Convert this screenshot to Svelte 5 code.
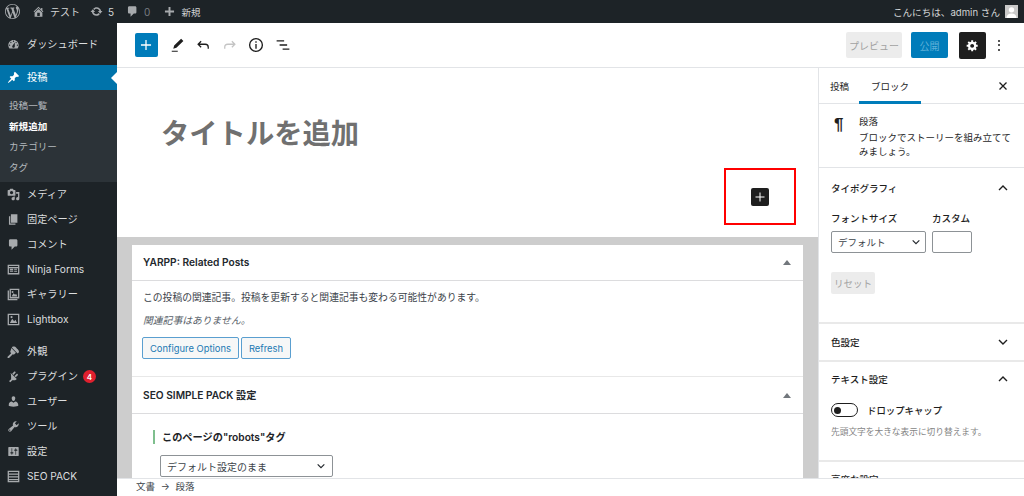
<script>
  const icons = {
    dash: "M3.76 16h12.48c1.1-1.37 1.76-3.11 1.76-5 0-4.42-3.58-8-8-8s-8 3.58-8 8c0 1.89.66 3.63 1.76 5zM10 4c.55 0 1 .45 1 1s-.45 1-1 1-1-.45-1-1 .45-1 1-1zM6 6c.55 0 1 .45 1 1s-.45 1-1 1-1-.45-1-1 .45-1 1-1zm8 0c.55 0 1 .45 1 1s-.45 1-1 1-1-.45-1-1 .45-1 1-1zm-5.370 5.550L12 7v6c0 1.100-.9 2-2 2s-2-.9-2-2c0-.57.24-1.080.63-1.450zM4 10c.55 0 1 .45 1 1s-.45 1-1 1-1-.45-1-1 .45-1 1-1zm12 0c.55 0 1 .45 1 1s-.45 1-1 1-1-.45-1-1 .45-1 1-1z",
    pin: "M10.440 3.020l1.820-1.820 6.360 6.350-1.830 1.820c-1.050-.68-2.480-.57-3.410.36l-.75.75c-.92.93-1.040 2.350-.35 3.410l-1.830 1.820-2.410-2.410-2.800 2.790c-.42.42-3.380 2.710-3.800 2.290s1.860-3.390 2.280-3.810l2.790-2.790L4.100 9.360l1.830-1.820c1.050.69 2.480.57 3.400-.36l.75-.75c.93-.92 1.050-2.350.36-3.410z",
    media: "M13 11V4c0-.55-.45-1-1-1h-1.670L9 1H5L3.670 3H2c-.55 0-1 .45-1 1v7c0 .55.45 1 1 1h10c.55 0 1-.45 1-1zM7 4.500c1.380 0 2.500 1.120 2.500 2.500S8.380 9.500 7 9.500 4.500 8.380 4.500 7 5.620 4.500 7 4.500zM14 6h5v10.500c0 1.380-1.120 2.500-2.500 2.500S14 17.880 14 16.500s1.120-2.500 2.500-2.500c.17 0 .34.020.5.050V9h-3V6zm-4 8.050V13h2v3.500c0 1.380-1.120 2.500-2.500 2.500S7 17.880 7 16.500 8.120 14 9.500 14c.17 0 .34.020.5.050z",
    page: "M6 15V2h10v13H6zm-1 1h8v2H3V5h2v11z",
    comment: "M5 2h9c1.100 0 2 .9 2 2v7c0 1.100-.9 2-2 2h-2l-5 5v-5H5c-1.100 0-2-.9-2-2V4c0-1.100.9-2 2-2z",
    forms: "M1 2.500h18v15H1v-15zm2 2V6h14V4.500H3zM3 8v7.500h14V8H3zm1.500 1h5v2.500h-5V9zm0 3.500h5V14h-5v-1.500zM11 9h4.500v1.500H11V9zm0 3h4.500v1.500H11V12z",
    gallery: "M1 4h2v13h13v2H1V4zm3-3h15v15H4V1zm2 2v11h11V3H6zm1 10l3-5 2.500 2.500L14 9l2 4H7zm1.500-8.500a1.500 1.500 0 1 1 0 3 1.500 1.500 0 0 1 0-3z",
    lightbox: "M1 1h18v18H1V1zm2 2v14h14V3H3zm1.500 12.500L8 9l3 3.500 2-2 2.500 5h-11zM7 4.500a1.700 1.700 0 1 1 0 3.400 1.700 1.700 0 0 1 0-3.400z",
    brush: "M14.480 11.060L7.410 3.990l1.500-1.500c.5-.56 2.300-.47 3.510.32 1.210.8 1.430 1.280 2.660 2.510 1.240 1.240 1.760 1.410 2.570 2.650.81 1.250.92 3.010.38 3.540l-1.500 1.500-2.050-1.950zM6.700 4.700l7.100 7.100-2.500 2.500c-.7.700-1.800.4-2.400-.2l-.8.800-5 5c-1 .4-2.500-.3-2.500-1.600l5.800-5.800-.8-.8c-.6-.6-.9-1.700-.2-2.400l1.300-4.600z",
    plug: "M13.110 4.360L9.870 7.600 8 5.730l3.240-3.240c.35-.34 1.050-.2 1.560.32.520.51.66 1.210.31 1.550zm3.530 3.530l-3.240 3.240-1.870-1.870 3.240-3.240c.35-.34 1.050-.2 1.560.31.520.52.66 1.220.31 1.560zM5.120 6.130l.91-1.120 9.010 9.010-1.190.84c-.71.71-2.110 1.060-3.250 1.060H8.170l-2.640 2.640c-.34.34-1.050.2-1.560-.31-.52-.52-.66-1.210-.31-1.560l2.640-2.640V9.380c0-1.140-.39-2.540-.32-3.250z",
    user: "M10 9.250c-2.270 0-2.730-3.440-2.730-3.440C7 4.020 7.820 2 9.970 2c2.160 0 2.980 2.020 2.710 3.810 0 0-.41 3.440-2.680 3.440zm0 2.570L12.720 10c2.390 0 4.520 2.330 4.520 4.530v2.490s-3.650 1.130-7.240 1.130c-3.650 0-7.240-1.130-7.240-1.130v-2.490c0-2.250 1.940-4.480 4.470-4.480z",
    tool: "M16.680 9.770c-1.340 1.340-3.300 1.670-4.950.99l-5.410 6.520c-.99.99-2.590.99-3.570 0-.99-.98-.99-2.580 0-3.570l6.520-5.420c-.68-1.650-.35-3.610.99-4.950 1.280-1.280 3.120-1.620 4.720-1.060l-2.890 2.890 2.820 2.820 2.860-2.870c.53 1.580.18 3.420-1.090 4.670zM4.930 16.430c.39-.39.39-1.020 0-1.410-.39-.39-1.030-.39-1.420 0-.39.39-.39 1.020 0 1.410.39.39 1.030.39 1.420 0z",
    settings: "M18 16V4c0-.55-.45-1-1-1H3c-.55 0-1 .45-1 1v12c0 .55.45 1 1 1h14c.55 0 1-.45 1-1zM8 11h1c.55 0 1 .45 1 1s-.45 1-1 1H8v1.500c0 .28-.22.5-.5.5s-.5-.22-.5-.5V13H6c-.55 0-1-.45-1-1s.45-1 1-1h1V5.500c0-.28.22-.5.5-.5s.5.22.5.5V11zm5-2h-1c-.55 0-1-.45-1-1s.45-1 1-1h1V5.500c0-.28.22-.5.5-.5s.5.22.5.5V7h1c.55 0 1 .45 1 1s-.45 1-1 1h-1v5.500c0 .28-.22.5-.5.5s-.5-.22-.5-.5V9z",
    seo: "M1 1h18v18H1V1zm2 2v2.500h14V3H3zm0 4.200v2.500h14V7.200H3zm0 4.200v2.500h14v-2.500H3zm0 4.200V17h14v-1.400H3z"
  };

  const topMenu = [{ icon: "dash", label: "ダッシュボード" }];
  const menuA = [
    { icon: "media", label: "メディア" },
    { icon: "page", label: "固定ページ" },
    { icon: "comment", label: "コメント" },
    { icon: "forms", label: "Ninja Forms" },
    { icon: "gallery", label: "ギャラリー" },
    { icon: "lightbox", label: "Lightbox" }
  ];
  const menuB = [
    { icon: "brush", label: "外観" },
    { icon: "plug", label: "プラグイン", badge: 4 },
    { icon: "user", label: "ユーザー" },
    { icon: "tool", label: "ツール" },
    { icon: "settings", label: "設定" },
    { icon: "seo", label: "SEO PACK" }
  ];
  const subMenu = ["投稿一覧", "新規追加", "カテゴリー", "タグ"];
</script>

<div class="screen">
  <header class="adminbar">
    <svg class="wp" viewBox="0 0 20 20"><path d="M20 10c0-5.510-4.490-10-10-10C4.480 0 0 4.490 0 10c0 5.520 4.480 10 10 10 5.510 0 10-4.480 10-10zM7.780 15.370L4.370 6.220c.55-.02 1.170-.08 1.170-.08.5-.06.44-1.130-.06-1.110 0 0-1.450.11-2.370.11-.18 0-.37 0-.58-.01C4.120 2.690 6.870 1.110 10 1.110c2.330 0 4.450.87 6.050 2.340-.68-.11-1.650.39-1.650 1.580 0 .74.45 1.360.9 2.100.35.61.55 1.360.55 2.460 0 1.490-1.400 5-1.400 5l-3.030-8.370c.54-.02.82-.17.82-.17.5-.05.44-1.250-.06-1.220 0 0-1.440.12-2.380.12-.87 0-2.330-.12-2.330-.12-.5-.03-.56 1.200-.06 1.220l.92.08 1.260 3.410zM17.410 10c.24-.64.74-1.870.43-4.250.7 1.290 1.050 2.710 1.050 4.250 0 3.290-1.730 6.240-4.400 7.780.97-2.590 1.940-5.200 2.920-7.780zM6.100 18.090C3.120 16.650 1.110 13.530 1.110 10c0-1.300.23-2.480.72-3.590C3.250 10.300 4.670 14.200 6.100 18.090zm4.030-6.630l2.580 6.980c-.86.290-1.760.45-2.710.45-.79 0-1.570-.11-2.300-.33.810-2.380 1.630-4.740 2.430-7.100z" /></svg>
    <span class="bar-item home">
      <svg viewBox="0 0 20 20"><path d="M16 8.500l1.530 1.530-1.060 1.060L10 4.620l-6.470 6.470-1.060-1.060L10 2.500l4 4v-2h2v4zm-6-2.460l6 5.990V18H4v-5.970zM12 17v-5H8v5h4z" /></svg>テスト
    </span>
    <span class="bar-item upd">
      <svg viewBox="0 0 20 20"><path d="M10.200 3.280c3.530 0 6.430 2.610 6.920 6h2.080l-3.500 4-3.500-4h2.320c-.45-1.970-2.210-3.440-4.320-3.440-1.450 0-2.730.71-3.540 1.780L4.950 5.660C6.230 4.200 8.110 3.280 10.200 3.280zm-.4 13.440c-3.520 0-6.430-2.610-6.920-6H.8l3.500-4c1.170 1.330 2.330 2.670 3.500 4H5.480c.45 1.970 2.210 3.440 4.320 3.440 1.450 0 2.730-.71 3.540-1.780l1.710 1.950c-1.280 1.460-3.150 2.390-5.250 2.390z" /></svg>5
    </span>
    <span class="bar-item cmt">
      <svg viewBox="0 0 20 20"><path d={icons.comment} /></svg><em>0</em>
    </span>
    <span class="bar-item new">
      <svg viewBox="0 0 20 20"><path d="M17 8.500h-5.500V3h-3v5.500H3v3h5.500V17h3v-5.500H17z" /></svg>新規
    </span>
    <span class="howdy">こんにちは、admin さん</span>
    <span class="avatar">
      <svg viewBox="0 0 14 14"><rect width="14" height="14" fill="#c9c9c9" /><circle cx="7" cy="5.200" r="2.900" fill="#fff" /><path d="M1.500 14c.3-3.500 2.500-4.800 5.500-4.800s5.200 1.300 5.500 4.800z" fill="#fff" /></svg>
    </span>
  </header>

  <div class="body">
    <nav class="sidebar">
      <ul class="menu first">
        {#each topMenu as m}
          <li><svg viewBox="0 0 20 20"><path d={icons[m.icon]} /></svg><span>{m.label}</span></li>
        {/each}
      </ul>
      <div class="current">
        <svg viewBox="0 0 20 20"><path d={icons.pin} /></svg><span>投稿</span>
        <i class="notch"></i>
      </div>
      <ul class="sub">
        {#each subMenu as s, i}
          <li class:on={i === 1}>{s}</li>
        {/each}
      </ul>
      <ul class="menu">
        {#each menuA as m}
          <li><svg viewBox="0 0 20 20"><path d={icons[m.icon]} /></svg><span>{m.label}</span></li>
        {/each}
      </ul>
      <ul class="menu second">
        {#each menuB as m}
          <li>
            <svg viewBox="0 0 20 20"><path d={icons[m.icon]} /></svg><span>{m.label}</span>
            {#if m.badge}<b class="badge">{m.badge}</b>{/if}
          </li>
        {/each}
      </ul>
    </nav>

    <div class="editor">
      <div class="toolbar">
        <button class="add" aria-label="add">
          <svg viewBox="0 0 24 24"><path d="M11.300 6.500h1.400v4.800h4.800v1.400h-4.800v4.800h-1.400v-4.800H6.500v-1.400h4.800z" /></svg>
        </button>
        <svg class="tool pencil" viewBox="0 0 24 24"><path d="M17.500 3.500l3 3-9.300 9.300-4.200 1.200 1.200-4.200zM5 19.500h8V21H5z" /></svg>
        <svg class="tool" viewBox="0 0 24 24" fill="none" stroke="#1e1e1e" stroke-width="1.700"><path d="M9.500 7L5.500 11l4 4M5.500 11H15c2.700 0 4 1.800 4 4v2" /></svg>
        <svg class="tool" viewBox="0 0 24 24" fill="none" stroke="#c4c4c4" stroke-width="1.700"><path d="M14.500 7l4 4-4 4M18.500 11H9c-2.700 0-4 1.800-4 4v2" /></svg>
        <svg class="tool" viewBox="0 0 24 24" fill="none" stroke="#1e1e1e" stroke-width="1.800"><circle cx="12" cy="12" r="8.500" /><path d="M12 10.500V17M12 7v2" /></svg>
        <svg class="tool" viewBox="0 0 24 24" fill="none" stroke="#1e1e1e" stroke-width="1.700"><path d="M3.500 6.500h10M7.500 12h10M11.500 17.500h9" /></svg>
        <span class="spacer"></span>
        <button class="preview">プレビュー</button>
        <button class="publish">公開</button>
        <button class="gear" aria-label="settings">
          <svg viewBox="0 0 20 20"><path d="M18 12h-2.180c-.17.7-.44 1.350-.81 1.930l1.540 1.540-2.100 2.100-1.540-1.540c-.58.36-1.230.64-1.910.81V19H8v-2.180c-.68-.17-1.330-.45-1.910-.81l-1.540 1.540-2.120-2.120 1.540-1.540c-.36-.58-.63-1.230-.8-1.890H1V9h2.180c.17-.7.44-1.350.8-1.930L2.430 5.530l2.100-2.100 1.540 1.540c.6-.36 1.240-.64 1.930-.81V2h3v2.180c.68.17 1.330.44 1.910.8l1.540-1.540 2.120 2.120-1.540 1.540c.36.59.64 1.240.81 1.900H18V12zm-8.500 1.500c1.660 0 3-1.340 3-3s-1.340-3-3-3-3 1.340-3 3 1.340 3 3 3z" /></svg>
        </button>
        <span class="dots"><i></i><i></i><i></i></span>
      </div>

      <div class="workspace">
        <main class="content">
          <section class="title-area">
            <h1>タイトルを追加</h1>
            <div class="marker">
              <span class="inserter">
                <svg viewBox="0 0 18 18"><path d="M8.500 4.500h1v4h4v1h-4v4h-1v-4h-4v-1h4z" /></svg>
              </span>
            </div>
          </section>
          <section class="meta">
            <div class="metabox">
              <div class="box-head"><h2>YARPP: Related Posts</h2><i class="tri"></i></div>
              <div class="box-body yarpp">
                <p>この投稿の関連記事。投稿を更新すると関連記事も変わる可能性があります。</p>
                <p class="none">関連記事はありません。</p>
                <div class="btns"><button>Configure Options</button><button>Refresh</button></div>
              </div>
              <div class="box-head seo"><h2>SEO SIMPLE PACK 設定</h2><i class="tri"></i></div>
              <div class="box-body robots">
                <h3>このページの"robots"タグ</h3>
                <div class="select wide">デフォルト設定のまま
                  <svg viewBox="0 0 12 12"><path d="M2 4l4 4 4-4" /></svg>
                </div>
              </div>
            </div>
          </section>
        </main>

        <aside class="panel">
          <div class="tabs">
            <span>投稿</span>
            <span class="active">ブロック</span>
            <svg class="close" viewBox="0 0 12 12"><path d="M2.500 2.500l7 7M9.500 2.500l-7 7" /></svg>
          </div>
          <div class="block-card">
            <span class="pilcrow">¶</span>
            <div>
              <div class="name">段落</div>
              <p>ブロックでストーリーを組み立ててみましょう。</p>
            </div>
          </div>
          <div class="group typo">
            <div class="group-head"><span>タイポグラフィ</span><svg viewBox="0 0 12 12"><path d="M2 8l4-4 4 4" /></svg></div>
            <div class="font-row">
              <div>
                <label for="fs">フォントサイズ</label>
                <div class="select" id="fs">デフォルト
                  <svg viewBox="0 0 12 12"><path d="M2 4l4 4 4-4" /></svg>
                </div>
              </div>
              <div>
                <label for="cs">カスタム</label>
                <div class="custom" id="cs"></div>
              </div>
            </div>
            <button class="reset">リセット</button>
          </div>
          <div class="group color">
            <div class="group-head"><span>色設定</span><svg viewBox="0 0 12 12"><path d="M2 4l4 4 4-4" /></svg></div>
          </div>
          <div class="group text">
            <div class="group-head"><span>テキスト設定</span><svg viewBox="0 0 12 12"><path d="M2 8l4-4 4 4" /></svg></div>
            <div class="toggle-row"><span class="toggle"><i></i></span><span>ドロップキャップ</span></div>
            <p class="help">先頭文字を大きな表示に切り替えます。</p>
          </div>
          <div class="group adv"><span>高度な設定</span></div>
        </aside>
      </div>
      <footer class="crumbs">文書 <span>→</span> 段落</footer>
    </div>
  </div>
</div>

<style>
  :global(body) {
    margin: 0;
    background: #fff;
  }

  .screen {
    width: 1024px;
    height: 496px;
    overflow: hidden;
    display: flex;
    flex-direction: column;
    font-family: "Inter", "Noto Sans CJK JP", sans-serif;
    font-size: 10px;
    color: #23282d;
  }

  ul { list-style: none; margin: 0; padding: 0; }
  button { font-family: inherit; cursor: pointer; }
  p, h1, h2, h3 { margin: 0; }

  /* admin bar */
  .adminbar {
    height: 23px;
    flex: none;
    background: #1d2327;
    color: #d3d5d6;
    display: flex;
    align-items: center;
    font-size: 10px;
    padding-left: 5px;
  }
  .adminbar svg { fill: #a7aaad; }
  .wp { width: 15px; height: 15px; margin-right: 12px; }
  .bar-item { display: flex; align-items: center; }
  .bar-item svg { width: 13px; height: 13px; margin-right: 5px; }
  .home { margin-right: 10px; }
  .upd { margin-right: 12px; }
  .cmt { margin-right: 13px; }
  .cmt em { font-style: normal; color: #787c82; }
  .new { font-size: 9.500px; }
  .howdy { margin-left: auto; margin-right: 5px; font-size: 9.600px; }
  .avatar { width: 13px; height: 13px; margin-right: 6px; display: flex; }
  .avatar svg { width: 13px; height: 13px; }

  .body { flex: 1; display: flex; min-height: 0; }

  /* left menu */
  .sidebar {
    width: 117px;
    flex: none;
    background: #1d2327;
    color: #dcdedf;
    font-size: 10.200px;
  }
  .menu li, .current {
    height: 25px;
    display: flex;
    align-items: center;
    padding-left: 7px;
  }
  .menu li span, .current span { padding-bottom: 2px; }
  .menu li svg, .current svg {
    width: 13px;
    height: 13px;
    margin-right: 7px;
    fill: #a7aaad;
    flex: none;
  }
  .menu.first { padding-top: 9px; padding-bottom: 8px; }
  .current {
    position: relative;
    background: #0073aa;
    color: #fff;
  }
  .current svg { fill: #fff; }
  .notch {
    position: absolute;
    right: 0;
    top: 7px;
    border: 6px solid transparent;
    border-right-color: #fff;
    border-left-width: 0;
  }
  .sub {
    height: 92px;
    box-sizing: border-box;
    background: #2c3338;
    padding-top: 6px;
    font-size: 9.600px;
    color: #b4b9be;
  }
  .sub li { height: 20.500px; line-height: 20.500px; padding-left: 9px; }
  .sub li.on { color: #fff; font-weight: 600; }
  .second { margin-top: 7px; }
  .badge {
    width: 13px;
    height: 13px;
    margin-left: 5px;
    border-radius: 50%;
    background: #e0202e;
    color: #fff;
    font-size: 8px;
    font-weight: 600;
    display: flex;
    align-items: center;
    justify-content: center;
  }

  /* editor */
  .editor { flex: 1; min-width: 0; display: flex; flex-direction: column; }
  .toolbar {
    height: 45px;
    box-sizing: border-box;
    flex: none;
    border-bottom: 1px solid #e2e4e7;
    display: flex;
    align-items: center;
    padding-left: 18px;
  }
  .add {
    width: 23px;
    height: 24px;
    padding: 1px 0;
    border: 0;
    border-radius: 2px;
    background: #007cba;
    margin-right: 9.500px;
    display: flex;
  }
  .add svg { fill: #fff; }
  .tool { width: 18px; height: 18px; margin-right: 8.500px; }
  .pencil { fill: #1e1e1e; }
  .spacer { flex: 1; }
  .preview {
    width: 56px;
    height: 26px;
    padding: 0;
    border: 0;
    border-radius: 2px;
    background: #ececec;
    color: #a2a2a2;
    font-size: 10px;
    margin-right: 9px;
  }
  .publish {
    width: 37px;
    height: 26px;
    padding: 0;
    border: 0;
    border-radius: 2px;
    background: #007cba;
    color: #5fb0d8;
    font-size: 10px;
    margin-right: 11px;
  }
  .gear {
    width: 27px;
    height: 27px;
    padding: 7px;
    border: 0;
    border-radius: 2px;
    background: #1e1e1e;
    display: flex;
  }
  .gear svg { fill: #fff; }
  .dots { display: flex; flex-direction: column; gap: 2.500px; margin: 0 24px 0 12px; }
  .dots i { width: 2px; height: 2px; border-radius: 50%; background: #1e1e1e; }

  .workspace { flex: 1; display: flex; min-height: 0; }
  .content { flex: 1; min-width: 0; display: flex; flex-direction: column; }
  .title-area {
    position: relative;
    height: 169px;
    flex: none;
    padding: 46px 0 0 44px;
    box-sizing: border-box;
  }
  h1 {
    font-size: 28.300px;
    line-height: 40px;
    font-weight: 700;
    color: #707070;
  }
  .marker {
    position: absolute;
    left: 607px;
    top: 100px;
    width: 72px;
    height: 57px;
    box-sizing: border-box;
    border: 2px solid #f00;
    display: flex;
    align-items: center;
    justify-content: center;
  }
  .inserter {
    width: 18px;
    height: 18px;
    border-radius: 2px;
    background: #1e1e1e;
    display: flex;
  }
  .inserter svg { fill: #fff; }

  .meta {
    flex: 1;
    min-height: 0;
    background: #cdcdcd;
    padding: 8px 15px 0 15px;
    overflow: hidden;
  }
  .metabox { background: #fff; height: 100%; }
  .box-head {
    height: 35px;
    border-bottom: 1px solid #dcdcde;
    display: flex;
    align-items: center;
    justify-content: space-between;
    padding: 0 12px 0 11px;
  }
  .box-head.seo { border-top: 1px solid #e8e8e8; height: 36px; }
  h2 { font-size: 10.200px; font-weight: 600; color: #23282d; padding-bottom: 2px; }
  .tri {
    width: 0;
    height: 0;
    border: 4px solid transparent;
    border-top: 0;
    border-bottom: 5px solid #72777c;
  }
  .box-body { padding: 0 11px; }
  .yarpp { height: 95px; padding-top: 11px; box-sizing: border-box; font-size: 9.800px; color: #3c434a; }
  .none { font-style: italic; margin-top: 11px; color: #555d66; }
  .yarpp p { line-height: 12px; }
  .btns { display: flex; gap: 2px; margin-top: 10px; margin-left: -1px; }
  .btns button {
    height: 22px;
    padding: 0 7px;
    border: 1px solid #5a9fd0;
    border-radius: 2px;
    background: #f6f7f7;
    color: #1b79b3;
    font-size: 9.400px;
  }
  .robots { padding: 16px 0 0 21px; }
  h3 {
    font-size: 10.200px;
    font-weight: 600;
    line-height: 14px;
    border-left: 2px solid #7fbf8e;
    padding-left: 7px;
    color: #1d2327;
  }
  .select {
    box-sizing: border-box;
    height: 22px;
    border: 1px solid #8d9296;
    border-radius: 2px;
    display: flex;
    align-items: center;
    justify-content: space-between;
    padding: 0 4px 0 6px;
    background: #fff;
    color: #3c434a;
    font-size: 9.500px;
  }
  .select svg { width: 10px; height: 10px; fill: none; stroke: #23282d; stroke-width: 1.400; }
  .wide {
    width: 173px;
    font-size: 10px;
    margin: 11px 0 0 7px;
    padding-right: 6px;
  }

  .crumbs {
    height: 18px;
    flex: none;
    background: #fff;
    border-top: 1px solid #e2e4e7;
    box-sizing: border-box;
    padding-left: 19px;
    font-size: 9.500px;
    line-height: 16px;
    color: #3c434a;
  }
  .crumbs span { margin: 0 3px; }

  /* right panel */
  .panel {
    width: 206px;
    flex: none;
    border-left: 1px solid #e2e4e7;
    box-sizing: border-box;
    overflow: hidden;
    background: #fff;
    font-size: 9.500px;
    color: #1e1e1e;
  }
  .tabs {
    height: 35px;
    border-bottom: 1px solid #e2e4e7;
    display: flex;
    align-items: center;
    padding-left: 11px;
    gap: 23px;
    position: relative;
  }
  .tabs .active {
    height: 100%;
    display: flex;
    align-items: center;
    margin-left: -1px;
    padding-right: 12px;
    position: relative;
  }
  .tabs .active::after {
    content: "";
    position: absolute;
    left: -12px;
    right: 0;
    bottom: -1px;
    height: 3px;
    background: #007cba;
  }
  .close {
    width: 12px;
    height: 12px;
    margin-left: auto;
    margin-right: 15px;
    fill: none;
    stroke: #1e1e1e;
    stroke-width: 1.300;
  }
  .block-card {
    height: 64px;
    box-sizing: border-box;
    padding: 11px 10px 0 15px;
    display: flex;
    border-bottom: 1px solid #e2e4e7;
  }
  .pilcrow {
    flex: none;
    width: 25px;
    font-size: 17px;
    font-weight: 700;
    line-height: 20px;
    font-family: "Liberation Sans", sans-serif;
  }
  .block-card .name { font-size: 9.500px; margin-bottom: 2px; line-height: 14px; }
  .block-card p { font-size: 9.500px; line-height: 14px; }
  .group { border-bottom: 2px solid #e9e9e9; padding: 0 15px 0 12px; }
  .group-head {
    height: 50px;
    display: flex;
    align-items: center;
    justify-content: space-between;
    font-weight: 500;
  }
  .group-head svg { width: 12px; height: 12px; fill: none; stroke: #1e1e1e; stroke-width: 1.400; }
  .typo { height: 156px; box-sizing: border-box; }
  .typo .group-head { height: 40px; }
  .font-row { display: flex; gap: 6px; margin-top: 3px; }
  label { display: block; font-weight: 500; margin-bottom: 5px; line-height: 14px; padding-top: 1px; }
  #fs { width: 95px; }
  .custom { box-sizing: border-box; width: 40px; height: 22px; border: 1px solid #8d9296; border-radius: 2px; }
  .reset {
    display: block;
    margin-top: 19px;
    width: 44px;
    height: 22px;
    padding: 0;
    border: 0;
    border-radius: 2px;
    background: #ececec;
    color: #a2a2a2;
    font-size: 9.500px;
  }
  .color { height: 38px; box-sizing: border-box; }
  .color .group-head { height: 36px; }
  .text .group-head { height: 34px; }
  .text { height: 100px; box-sizing: border-box; }
  .toggle-row { display: flex; align-items: center; gap: 9px; font-weight: 500; margin-top: 7px; font-size: 9.400px; }
  .toggle {
    box-sizing: border-box;
    width: 27px;
    height: 14px;
    border: 1.500px solid #1e1e1e;
    border-radius: 7px;
    display: flex;
    align-items: center;
    padding-left: 2px;
  }
  .toggle i { width: 7px; height: 7px; border-radius: 50%; background: #1e1e1e; }
  .help { margin-top: 9px; font-size: 8.700px; line-height: 13px; color: #858585; }
  .adv { padding-top: 11px; font-weight: 500; line-height: 14px; }
</style>
